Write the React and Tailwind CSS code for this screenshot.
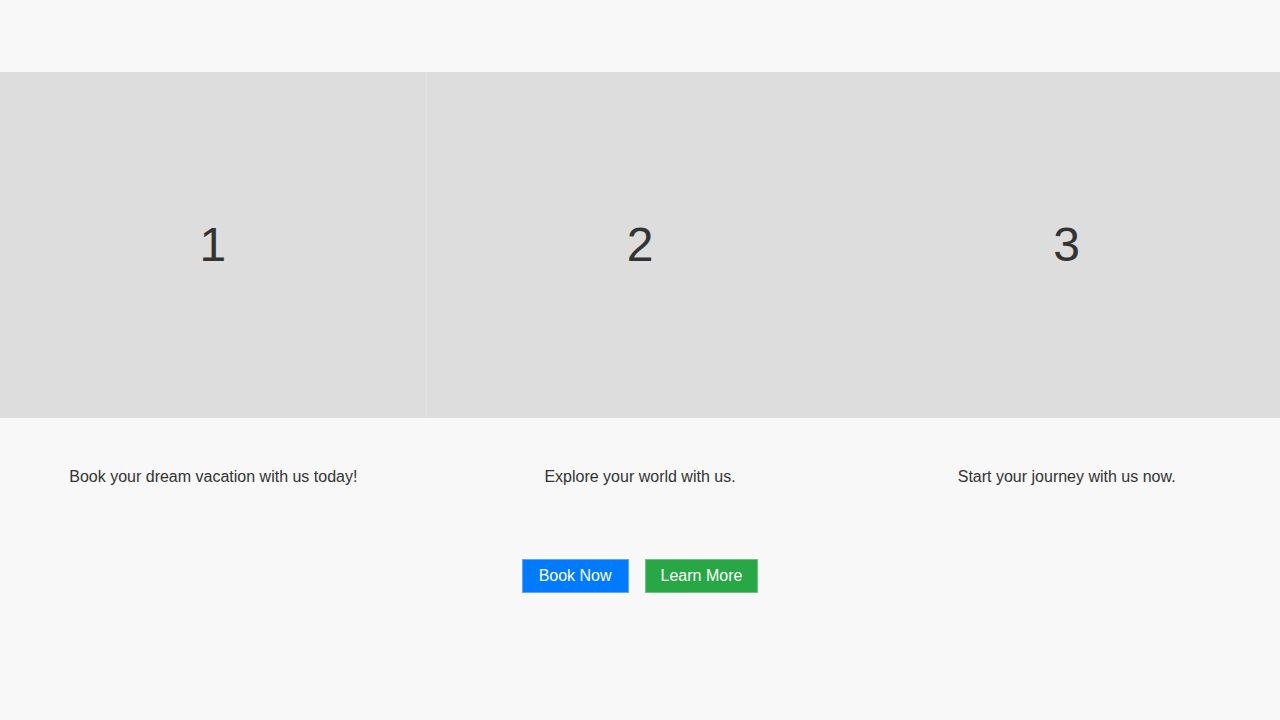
import React from 'react';

const slides = [
  { id: 1, caption: 'Book your dream vacation with us today!' },
  { id: 2, caption: 'Explore your world with us.' },
  { id: 3, caption: 'Start your journey with us now.' },
];

function App() {
  return (
    <div
      className="min-h-screen w-full bg-[#f8f8f8] text-[#333]"
      style={{ fontFamily: '"Liberation Sans", Arial, sans-serif' }}
    >
      <div className="pt-[72px] flex flex-row w-full">
        {slides.map((s, i) => (
          <div key={s.id} className="flex-1 flex flex-col">
            <div
              className={
                'h-[346px] bg-[#dddddd] flex items-center justify-center text-[48px] ' +
                (i === 0 ? 'border-r border-[#e4e4e4]' : '')
              }
            >
              {s.id}
            </div>
            <p className="pt-[50px] text-center text-base leading-[18px]">{s.caption}</p>
          </div>
        ))}
      </div>
      <div className="flex flex-row justify-center gap-4 mt-[73px]">
        <button className="px-[16px] py-1 text-base leading-6 text-white bg-[#007bff] border border-[#5aa5ff]">
          Book Now
        </button>
        <button className="px-[15px] py-1 text-base leading-6 text-white bg-[#28a745] border border-[#6cc283]">
          Learn More
        </button>
      </div>
    </div>
  );
}

export default App;
